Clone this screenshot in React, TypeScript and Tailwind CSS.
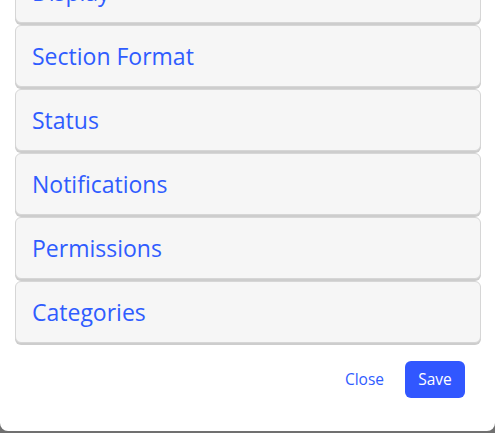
const sections = [
  "Display",
  "Section Format",
  "Status",
  "Notifications",
  "Permissions",
  "Categories",
];

export default function App() {
  return (
    <div
      className="h-[433px] w-[495px] bg-[#707070]"
      style={{ fontFamily: '"Open Sans", "Noto Sans", sans-serif' }}
    >
      <div className="flex h-[431px] flex-col rounded-b-[8px] bg-white">
        {/* scrolled list */}
        <div className="h-[345px] overflow-hidden">
          <div className="-mt-[39px] flex flex-col gap-[2px] pl-[15px] pr-[14px]">
            {sections.map((name) => (
              <div
                key={name}
                className="flex h-[62px] items-center rounded-[6px] border border-[#d6d6d6] bg-[#f6f6f6] px-4 shadow-[0_2px_0_#cdcdcd]"
              >
                <span className="text-[23px] text-[#2f5cff]">{name}</span>
              </div>
            ))}
          </div>
        </div>

        {/* footer */}
        <div className="flex items-start justify-end gap-[21px] pt-[16px] pr-[30px]">
          <button className="h-[37px] text-[15.5px] text-[#2f5cff]">Close</button>
          <button className="h-[37px] w-[60px] rounded-[6px] bg-[#3157ff] text-[15.5px] text-white">
            Save
          </button>
        </div>
      </div>
    </div>
  );
}
